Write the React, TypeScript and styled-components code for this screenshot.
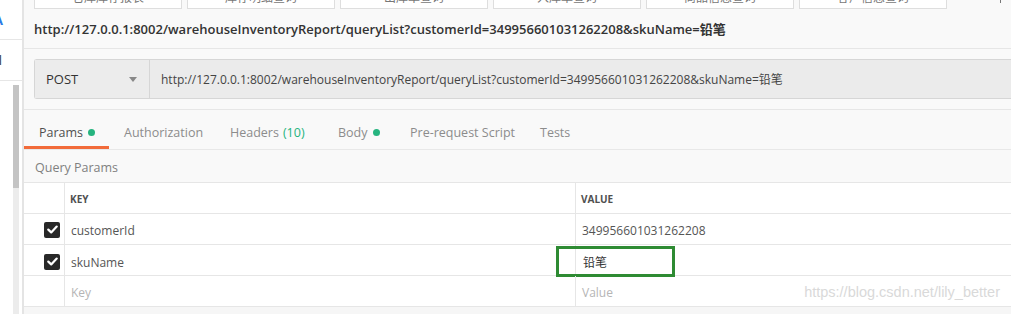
import React from 'react'
import styled, { createGlobalStyle } from 'styled-components'

const GlobalStyle = createGlobalStyle`
  html, body {
    margin: 0;
    padding: 0;
    background: #f9f9f9;
    font-family: "Open Sans", "Noto Sans CJK SC", sans-serif;
    overflow: hidden;
  }
`

const Page = styled.div`
  display: flex;
  width: 1011px;
  height: 314px;
  overflow: hidden;
`

const Sidebar = styled.div`
  width: 22px;
  flex-shrink: 0;
  background: #ffffff;
  border-right: 2px solid #e4e4e4;
  display: flex;
  flex-direction: column;
`

const SideItem = styled.div<{ $h: number }>`
  height: ${p => p.$h}px;
  border-bottom: 1px solid #e6e6e6;
  display: flex;
  align-items: center;
  overflow: hidden;
`

const SideGlyph = styled.span<{ $color: string }>`
  margin-left: -6px;
  font-size: 13px;
  font-weight: 700;
  color: ${p => p.$color};
`

const ScrollArea = styled.div`
  flex: 1;
  display: flex;
  padding: 4px 3px 0 13px;
`

const Track = styled.div`
  width: 6px;
  background: #ececec;
  display: flex;
  flex-direction: column;
`

const Thumb = styled.div`
  height: 103px;
  background: #c4c4c4;
`

const Main = styled.div`
  flex: 1;
  display: flex;
  flex-direction: column;
  background: #f9f9f9;
  min-width: 0;
`

const TopTabs = styled.div`
  height: 9px;
  display: flex;
  gap: 5px;
  padding-left: 10px;
  overflow: hidden;
`

const TopTab = styled.div`
  width: 146px;
  flex-shrink: 0;
  height: 8px;
  background: #ffffff;
  border: 1px solid #dedede;
  border-top: none;
  overflow: hidden;
  display: flex;
  justify-content: center;
`

const TopTabText = styled.span`
  margin-top: -12px;
  font-size: 12px;
  color: #777;
  white-space: nowrap;
`

const TopTabEnd = styled.div`
  margin-left: auto;
  margin-right: 10px;
  width: 1px;
  height: 3px;
  background: #777;
`

const TitleRow = styled.div`
  height: 39px;
  display: flex;
  align-items: center;
  padding-left: 10px;
  border-bottom: 1px solid #e6e6e6;
  font-size: 13px;
  font-weight: 600;
  color: #333;
  white-space: nowrap;
`

const RequestBar = styled.div`
  display: flex;
  height: 40px;
  margin: 10px 0 10px 10px;
  border-top: 1px solid #d6d6d6;
  border-bottom: 1px solid #d6d6d6;
  border-left: 1px solid #d6d6d6;
  border-radius: 3px 0 0 3px;
  background: #ebebeb;
  box-sizing: border-box;
`

const MethodBox = styled.div`
  width: 115px;
  display: flex;
  align-items: center;
  justify-content: space-between;
  padding: 0 12px 0 11px;
  border-right: 1px solid #d6d6d6;
  background: #ececec;
  box-sizing: border-box;
  font-size: 13px;
  color: #333;
`

const Caret = styled.span`
  width: 0;
  height: 0;
  border-left: 4px solid transparent;
  border-right: 4px solid transparent;
  border-top: 5px solid #888;
`

const UrlInput = styled.div`
  flex: 1;
  display: flex;
  align-items: center;
  padding-left: 11px;
  font-size: 12px;
  color: #444;
  white-space: nowrap;
  overflow: hidden;
`

const TabBar = styled.div`
  display: flex;
  height: 41px;
  border-top: 1px solid #e6e6e6;
  border-bottom: 1px solid #e8e8e8;
  box-sizing: border-box;
`

const Tab = styled.div<{ $active?: boolean; $w: number }>`
  width: ${p => p.$w}px;
  box-sizing: border-box;
  display: flex;
  align-items: center;
  padding-left: 15px;
  padding-top: 9px;
  font-size: 12.5px;
  color: ${p => (p.$active ? '#505050' : '#8c8c8c')};
  border-bottom: 3px solid ${p => (p.$active ? '#f26b3a' : 'transparent')};
  white-space: nowrap;
`

const Count = styled.span`
  color: #26b47f;
  margin-left: 4px;
`

const Dot = styled.span`
  width: 7px;
  height: 7px;
  border-radius: 50%;
  background: #26b47f;
  margin-left: 5px;
`

const SectionLabel = styled.div`
  height: 33px;
  display: flex;
  align-items: center;
  padding-left: 11px;
  padding-top: 3px;
  box-sizing: border-box;
  font-size: 12.5px;
  color: #808080;
  border-bottom: 1px solid #e6e6e6;
`

const Table = styled.div`
  display: flex;
  flex-direction: column;
  background: #ffffff;
`

const Row = styled.div`
  display: grid;
  grid-template-columns: 40px 511px 1fr;
  height: 31px;
  border-bottom: 1px solid #e6e6e6;
  box-sizing: border-box;
`

const Cell = styled.div<{ $head?: boolean; $muted?: boolean }>`
  display: flex;
  align-items: center;
  padding-left: ${p => (p.$head ? 5 : 6)}px;
  padding-top: 2px;
  border-left: 1px solid #e6e6e6;
  font-size: ${p => (p.$head ? 10 : 12)}px;
  font-weight: ${p => (p.$head ? 700 : 400)};
  color: ${p => (p.$muted ? '#b5b5b5' : p.$head ? '#505050' : '#555')};
  white-space: nowrap;
`

const CheckCell = styled.div`
  display: flex;
  align-items: center;
  justify-content: flex-end;
  padding-right: 4px;
  padding-top: 1px;
`

const CheckBox = styled.div`
  width: 16px;
  height: 16px;
  border-radius: 2px;
  background: #282828;
  display: flex;
  align-items: center;
  justify-content: center;
`

const HighlightBox = styled.div`
  margin-left: -26px;
  margin-top: -1px;
  padding-left: 24px;
  width: 119px;
  height: 31px;
  box-sizing: border-box;
  border: 3px solid #2e8b33;
  display: flex;
  align-items: center;
  color: #333;
`

const Watermark = styled.span`
  margin-left: auto;
  margin-right: 11px;
  font-family: "Liberation Sans", Arial, sans-serif;
  font-size: 14.5px;
  color: #d9d9d9;
`

const Bottom = styled.div`
  flex: 1;
  background: #f6f6f6;
`

const Check = () => (
  <svg width="11" height="9" viewBox="0 0 11 9">
    <path d="M1.3 4.6 L4.2 7.4 L9.7 1.6" fill="none" stroke="#fff" strokeWidth="2.2" strokeLinecap="round" strokeLinejoin="round" />
  </svg>
)

const url = 'http://127.0.0.1:8002/warehouseInventoryReport/queryList?customerId=349956601031262208&skuName=铅笔'

const topTabs = ['仓库库存报表', '库存明细查询', '出库单查询', '入库单查询', '商品信息查询', '客户信息查询']

const App = () => {
  return (
    <Page>
      <GlobalStyle />
      <Sidebar>
        <SideItem $h={39}>
          <SideGlyph $color="#2d7be5">A</SideGlyph>
        </SideItem>
        <SideItem $h={40}>
          <SideGlyph $color="#555">ll</SideGlyph>
        </SideItem>
        <ScrollArea>
          <Track>
            <Thumb />
          </Track>
        </ScrollArea>
      </Sidebar>
      <Main>
        <TopTabs>
          {topTabs.map(t => (
            <TopTab key={t}>
              <TopTabText>{t}</TopTabText>
            </TopTab>
          ))}
          <TopTabEnd />
        </TopTabs>
        <TitleRow>{url}</TitleRow>
        <RequestBar>
          <MethodBox>
            POST
            <Caret />
          </MethodBox>
          <UrlInput>{url}</UrlInput>
        </RequestBar>
        <TabBar>
          <Tab $active $w={85}>
            Params<Dot />
          </Tab>
          <Tab $w={106}>Authorization</Tab>
          <Tab $w={108}>
            Headers<Count>(10)</Count>
          </Tab>
          <Tab $w={72}>
            Body<Dot />
          </Tab>
          <Tab $w={130}>Pre-request Script</Tab>
          <Tab $w={60}>Tests</Tab>
        </TabBar>
        <SectionLabel>Query Params</SectionLabel>
        <Table>
          <Row>
            <CheckCell />
            <Cell $head>KEY</Cell>
            <Cell $head>VALUE</Cell>
          </Row>
          <Row>
            <CheckCell>
              <CheckBox>
                <Check />
              </CheckBox>
            </CheckCell>
            <Cell>customerId</Cell>
            <Cell>349956601031262208</Cell>
          </Row>
          <Row>
            <CheckCell>
              <CheckBox>
                <Check />
              </CheckBox>
            </CheckCell>
            <Cell>skuName</Cell>
            <Cell>
              <HighlightBox>铅笔</HighlightBox>
            </Cell>
          </Row>
          <Row>
            <CheckCell />
            <Cell $muted>Key</Cell>
            <Cell $muted>
              Value
              <Watermark>https://blog.csdn.net/lily_better</Watermark>
            </Cell>
          </Row>
        </Table>
        <Bottom />
      </Main>
    </Page>
  )
}

export default App
